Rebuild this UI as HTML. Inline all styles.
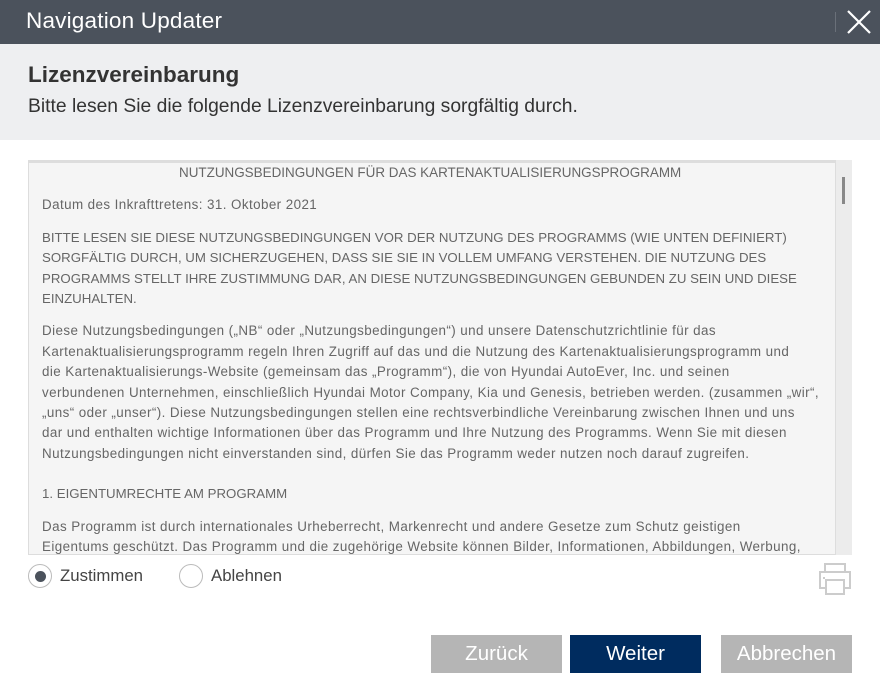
<!DOCTYPE html>
<html><head><meta charset="utf-8"><style>
*{margin:0;padding:0;box-sizing:border-box}
body{width:880px;height:694px;background:#fff;font-family:"Liberation Sans",sans-serif;position:relative;overflow:hidden}
.top{position:absolute;left:0;top:0;width:880px;height:44px;background:#4b525c;color:#fff}
.top .t{position:absolute;left:26px;top:8px;font-size:22.5px;letter-spacing:0.2px}
.top .sep{position:absolute;left:835px;top:12px;width:1px;height:20px;background:#6a7079}
.hdr{position:absolute;left:0;top:44px;width:880px;height:96px;background:#eeeff1;color:#222}
.hdr .h{position:absolute;left:28px;top:18px;font-size:22.5px;font-weight:bold;color:#333}
.hdr .s{position:absolute;left:28px;top:52px;font-size:19.3px;color:#333}
.box{position:absolute;left:28px;top:160px;width:808px;height:395px;background:#f5f5f5;border:1px solid #ddd;border-top:3px solid #ddd;overflow:hidden}
.track{position:absolute;left:836px;top:160px;width:16px;height:395px;background:#ececec}
.thumb{position:absolute;left:842px;top:177px;width:3px;height:27px;background:#888}
.l{position:absolute;left:13px;white-space:nowrap;font-size:13.4px;color:#666;letter-spacing:0.42px}
.u{font-size:13.25px;letter-spacing:0}
.radio{position:absolute;top:564px;width:24px;height:24px;border:1px solid #bbb;border-radius:50%;background:#fff}
.rl{position:absolute;top:566px;font-size:16.8px;color:#444}
.btn{position:absolute;top:635px;height:38px;color:#fff;font-size:20.5px;text-align:center;line-height:38px}
</style></head><body>
<div class="top"><div class="t">Navigation Updater</div><div class="sep"></div>
<svg style="position:absolute;left:846px;top:9px" width="26" height="26"><path d="M2 2L24 24M24 2L2 24" stroke="#fff" stroke-width="2.2"/></svg></div>
<div class="hdr"><div class="h">Lizenzvereinbarung</div><div class="s">Bitte lesen Sie die folgende Lizenzvereinbarung sorgfältig durch.</div></div>
<div class="box">
<div class="l u" style="left:150px;top:2px;font-size:13.45px">NUTZUNGSBEDINGUNGEN FÜR DAS KARTENAKTUALISIERUNGSPROGRAMM</div>
<div class="l" style="top:34px">Datum des Inkrafttretens: 31. Oktober 2021</div>
<div class="l u" style="top:67px">BITTE LESEN SIE DIESE NUTZUNGSBEDINGUNGEN VOR DER NUTZUNG DES PROGRAMMS (WIE UNTEN DEFINIERT)</div>
<div class="l u" style="top:87px">SORGFÄLTIG DURCH, UM SICHERZUGEHEN, DASS SIE SIE IN VOLLEM UMFANG VERSTEHEN. DIE NUTZUNG DES</div>
<div class="l u" style="top:108px">PROGRAMMS STELLT IHRE ZUSTIMMUNG DAR, AN DIESE NUTZUNGSBEDINGUNGEN GEBUNDEN ZU SEIN UND DIESE</div>
<div class="l u" style="top:128px">EINZUHALTEN.</div>
<div class="l" style="top:160px">Diese Nutzungsbedingungen („NB“ oder „Nutzungsbedingungen“) und unsere Datenschutzrichtlinie für das</div>
<div class="l" style="top:181px">Kartenaktualisierungsprogramm regeln Ihren Zugriff auf das und die Nutzung des Kartenaktualisierungsprogramm und</div>
<div class="l" style="top:201px">die Kartenaktualisierungs-Website (gemeinsam das „Programm“), die von Hyundai AutoEver, Inc. und seinen</div>
<div class="l" style="top:222px">verbundenen Unternehmen, einschließlich Hyundai Motor Company, Kia und Genesis, betrieben werden. (zusammen „wir“,</div>
<div class="l" style="top:242px">„uns“ oder „unser“). Diese Nutzungsbedingungen stellen eine rechtsverbindliche Vereinbarung zwischen Ihnen und uns</div>
<div class="l" style="top:262px">dar und enthalten wichtige Informationen über das Programm und Ihre Nutzung des Programms. Wenn Sie mit diesen</div>
<div class="l" style="top:283px">Nutzungsbedingungen nicht einverstanden sind, dürfen Sie das Programm weder nutzen noch darauf zugreifen.</div>
<div class="l u" style="top:323px">1. EIGENTUMRECHTE AM PROGRAMM</div>
<div class="l" style="top:356px">Das Programm ist durch internationales Urheberrecht, Markenrecht und andere Gesetze zum Schutz geistigen</div>
<div class="l" style="top:376px">Eigentums geschützt. Das Programm und die zugehörige Website können Bilder, Informationen, Abbildungen, Werbung,</div>
</div>
<div class="track"></div><div class="thumb"></div>
<div class="radio" style="left:28px"><div style="position:absolute;left:6px;top:6px;width:11px;height:11px;border-radius:50%;background:#4b525c"></div></div>
<div class="rl" style="left:60px">Zustimmen</div>
<div class="radio" style="left:179px"></div>
<div class="rl" style="left:211px">Ablehnen</div>
<svg style="position:absolute;left:818px;top:562px" width="36" height="34" fill="none" stroke="#ccc" stroke-width="2"><rect x="7" y="2" width="20" height="8"/><rect x="2" y="10" width="30" height="16"/><rect x="8" y="18" width="18" height="14" fill="#fff"/><line x1="6" y1="15" x2="6" y2="17"/></svg>
<div class="btn" style="left:431px;width:131px;background:#b5b5b5">Zurück</div>
<div class="btn" style="left:570px;width:131px;background:#002c5f">Weiter</div>
<div class="btn" style="left:721px;width:131px;background:#b5b5b5">Abbrechen</div>
</body></html>
